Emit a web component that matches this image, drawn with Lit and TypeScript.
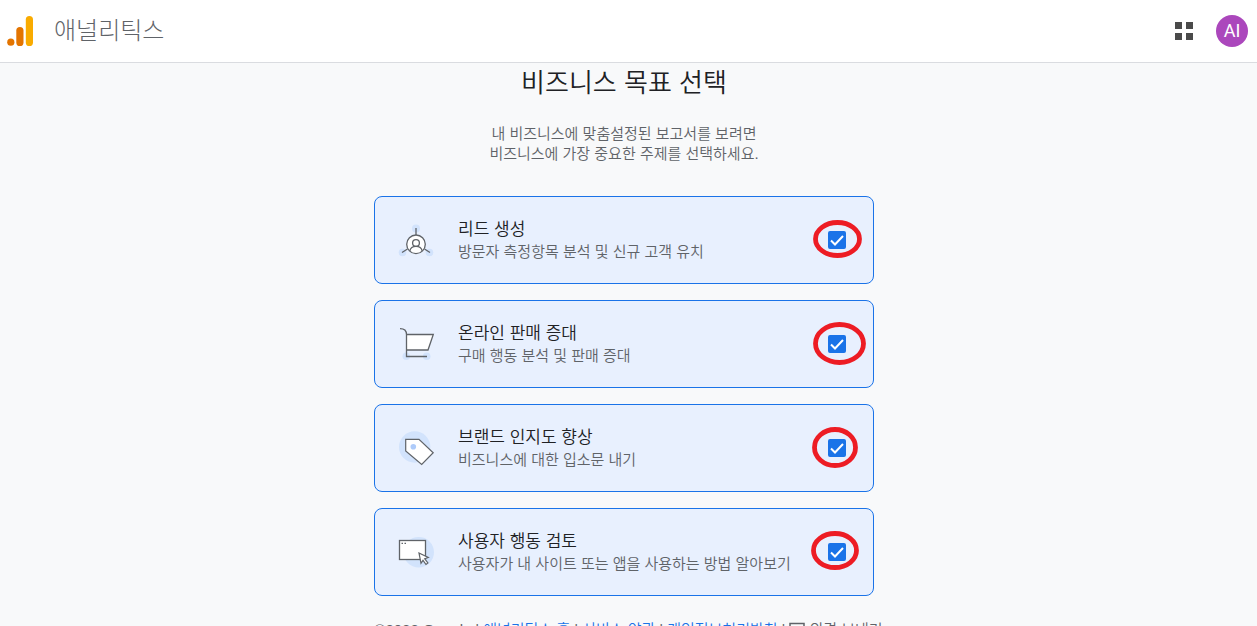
import { LitElement, html, svg, css, SVGTemplateResult } from "lit";
import { customElement, property, state } from "lit/decorators.js";

interface Goal {
  id: string;
  title: string;
  text: string;
  icon: SVGTemplateResult;
  ring: { cx: number; cy: number; rx: number; ry: number };
}

const leadIcon = svg`
  <g fill="#d2e3fc"><circle cx="20" cy="8.5" r="4"/><circle cx="6.5" cy="32.5" r="3.8"/><circle cx="33.5" cy="32.5" r="3.8"/></g>
  <path d="M20 8v7M11.5 29 6 32.5M28.5 29l5.5 3.5" stroke="#5f6368" stroke-width="1.3"/>
  <circle cx="20" cy="24.3" r="9.3" fill="#fff" stroke="#5f6368" stroke-width="1.3"/>
  <circle cx="20" cy="23" r="3.4" fill="none" stroke="#5f6368" stroke-width="1.3"/>
  <path d="M13.8 31c.6-3 3-4.6 6.2-4.6s5.6 1.6 6.2 4.6" fill="none" stroke="#5f6368" stroke-width="1.3"/>`;

const cartIcon = svg`
  <g fill="#d2e3fc"><circle cx="10.3" cy="32.3" r="3.8"/><circle cx="30.7" cy="32.3" r="3.8"/></g>
  <path d="M10.5 10.500H37.300L32 26H10.500z" fill="#fff"/>
  <path d="M4 4.700c4 0 6.500 2 6.500 5.800H37.300L32 26H10.500V10.500V32.500H31" fill="none" stroke="#5f6368" stroke-width="1.3"/>`;

const tagIcon = svg`
  <circle cx="18.7" cy="19" r="15.7" fill="#d2e3fc"/>
  <path d="M9.700 11.300H23L37.200 24.700 25.700 36.500 9.700 23z" fill="#fff" stroke="#5f6368" stroke-width="1.2"/>
  <circle cx="17.3" cy="18.7" r="2.8" fill="#aecbfa"/>`;

const windowIcon = svg`
  <circle cx="22.7" cy="20.3" r="15.3" fill="#d2e3fc"/>
  <rect x="3.5" y="8.5" width="26" height="19" fill="#fff" stroke="#5f6368" stroke-width="1.3"/>
  <path d="M5.500 11.300h1.500M8.500 11.300h1.500" stroke="#5f6368" stroke-width="1.3"/>
  <path d="M23 21l9.300 4.500-3.600 1.300 3.200 4.200-1.900 1.500-3-4.200-2 3z" fill="#fff" stroke="#5f6368" stroke-width="1.2"/>`;

const GOALS: Goal[] = [
  { id: "leads", title: "리드 생성", text: "방문자 측정항목 분석 및 신규 고객 유치", icon: leadIcon, ring: { cx: 32.5, cy: 27, rx: 22, ry: 16.5 } },
  { id: "sales", title: "온라인 판매 증대", text: "구매 행동 분석 및 판매 증대", icon: cartIcon, ring: { cx: 34.5, cy: 27.5, rx: 24, ry: 19 } },
  { id: "brand", title: "브랜드 인지도 향상", text: "비즈니스에 대한 입소문 내기", icon: tagIcon, ring: { cx: 30, cy: 27.5, rx: 20.5, ry: 18 } },
  { id: "behavior", title: "사용자 행동 검토", text: "사용자가 내 사이트 또는 앱을 사용하는 방법 알아보기", icon: windowIcon, ring: { cx: 30, cy: 26.5, rx: 21.5, ry: 17 } },
];

@customElement("goal-card")
class GoalCard extends LitElement {
  @property({ attribute: false }) goal!: Goal;
  @state() checked = true;

  static styles = css`
    :host { display: block; }
    .card {
      display: flex;
      align-items: center;
      box-sizing: border-box;
      min-height: 88px;
      padding: 20px 27px 20px 21px;
      border: 1px solid #dadce0;
      border-radius: 8px;
      background: #fff;
      cursor: pointer;
    }
    .selected { border-color: #1a73e8; background: #e8f0fe; }
    .icon { width: 40px; height: 40px; flex: none; margin-right: 22px; }
    .copy { flex: 1; display: flex; flex-direction: column; }
    .title { font-size: 17px; line-height: 24px; color: #202124; }
    .text { font-size: 15px; line-height: 20px; color: #5f6368; white-space: nowrap; }
    .pick { position: relative; display: grid; width: 18px; height: 18px; flex: none; }
    .box {
      grid-area: 1 / 1;
      appearance: none;
      width: 18px;
      height: 18px;
      margin: 0;
      border: 2px solid #5f6368;
      border-radius: 2px;
    }
    .box:checked { border-color: #1a73e8; background: #1a73e8; }
    .tick { grid-area: 1 / 1; width: 18px; height: 18px; z-index: 1; pointer-events: none; }
    .ring { position: absolute; left: -23px; top: -19px; width: 64px; height: 56px; z-index: 2; pointer-events: none; }
  `;

  render() {
    const { id, title, text, icon, ring } = this.goal;
    return html`
      <label class="card ${this.checked ? "selected" : ""}" for=${id}>
        <svg class="icon" viewBox="0 0 40 40" aria-hidden="true">${icon}</svg>
        <span class="copy"><span class="title">${title}</span><span class="text">${text}</span></span>
        <span class="pick">
          <input class="box" id=${id} type="checkbox" .checked=${this.checked}
            @change=${(e: Event) => (this.checked = (e.target as HTMLInputElement).checked)} />
          <svg class="tick" viewBox="0 0 18 18" aria-hidden="true">
            <path d="M3 9.500l4 4 8-8.500" fill="none" stroke="#fff" stroke-width="2" />
          </svg>
          <svg class="ring" viewBox="0 0 64 56" aria-hidden="true">
            <ellipse cx=${ring.cx} cy=${ring.cy} rx=${ring.rx} ry=${ring.ry} fill="none" stroke="#ed1c24" stroke-width="4.8" />
          </svg>
        </span>
      </label>`;
  }
}

@customElement("app-root")
class AppRoot extends LitElement {
  static styles = css`
    :host {
      display: flex;
      flex-direction: column;
      height: 100vh;
      overflow: hidden;
      background: #f8f9fa;
      font-family: "Liberation Sans", "Noto Sans CJK KR", sans-serif;
      font-weight: 350;
      color: #202124;
    }
    .top {
      display: flex;
      align-items: center;
      height: 62px;
      flex: none;
      padding: 0 9px 0 7px;
      border-bottom: 1px solid #dadce0;
      background: #fff;
    }
    .logo { width: 26px; height: 30px; margin-right: 21px; }
    .product { flex: 1; font-size: 24px; line-height: 32px; font-weight: 300; color: #5f6368; }
    .apps { display: grid; place-items: center; width: 40px; height: 40px; margin-right: 12px; padding: 0; border: 0; background: none; }
    .dots { width: 18px; height: 18px; }
    .avatar {
      width: 32px;
      height: 32px;
      padding: 0;
      border: 0;
      border-radius: 50%;
      background: #ab47bc;
      color: #fff;
      font: 18px/32px Roboto, sans-serif;
    }
    .main { flex: 1; min-height: 0; overflow-y: auto; scrollbar-width: none; padding-right: 9px; }
    .heading { margin: 0; font-size: 26px; line-height: 40px; font-weight: 350; text-align: center; }
    .lead { margin: 21px 0 32px; font-size: 15px; line-height: 20px; color: #5f6368; text-align: center; }
    .goals { display: grid; gap: 16px; max-width: 500px; margin: 0 auto; }
    .footer {
      display: flex;
      justify-content: center;
      align-items: center;
      gap: 4px;
      margin-top: 24px;
      padding-left: 9px;
      font-size: 15px;
      line-height: 20px;
      color: #5f6368;
      white-space: nowrap;
    }
    .link { color: #1a73e8; text-decoration: none; }
    .feedback { display: flex; align-items: center; gap: 4px; padding: 0; border: 0; background: none; font: inherit; color: inherit; }
    .bubble { width: 16px; height: 16px; }
  `;

  render() {
    return html`
      <header class="top">
        <svg class="logo" viewBox="0 0 26 30" aria-hidden="true">
          <rect x="18.8" width="7.2" height="30" rx="3.6" fill="#f9ab00" />
          <rect x="9.3" y="11" width="7.2" height="19" rx="3.6" fill="#e37400" />
          <circle cx="3.8" cy="26.2" r="3.6" fill="#e37400" />
        </svg>
        <span class="product">애널리틱스</span>
        <button class="apps" aria-label="Apps">
          <svg class="dots" viewBox="0 0 18 18" fill="#4a4a4a"><path d="M0 0h7v7H0zM11 0h7v7h-7zM0 11h7v7H0zM11 11h7v7h-7z" /></svg>
        </button>
        <button class="avatar">AI</button>
      </header>
      <main class="main">
        <h1 class="heading">비즈니스 목표 선택</h1>
        <p class="lead">내 비즈니스에 맞춤설정된 보고서를 보려면<br />비즈니스에 가장 중요한 주제를 선택하세요.</p>
        <div class="goals">${GOALS.map((goal) => html`<goal-card .goal=${goal}></goal-card>`)}</div>
        <footer class="footer">
          <span>©2023 Google</span><span>|</span>
          <a class="link" href="#home">애널리틱스 홈</a><span>|</span>
          <a class="link" href="#terms">서비스 약관</a><span>|</span>
          <a class="link" href="#privacy">개인정보처리방침</a><span>|</span>
          <button class="feedback">
            <svg class="bubble" viewBox="0 0 16 16" fill="none" stroke="#5f6368" stroke-width="1.5"><path d="M1 15V1.500h14V12H4z" /></svg>
            의견 보내기
          </button>
        </footer>
      </main>`;
  }
}
